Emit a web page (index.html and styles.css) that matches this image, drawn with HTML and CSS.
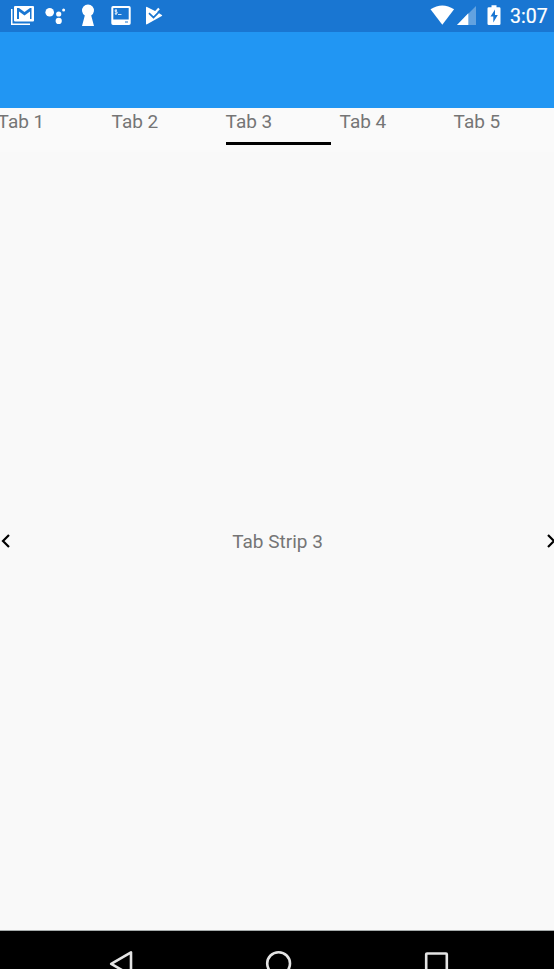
FILE: index.html
```html
<!DOCTYPE html>
<html lang="en">
<head>
<meta charset="utf-8">
<title>Tab Strip</title>
<link rel="stylesheet" href="styles.css">
</head>
<body>
<div class="screen">
  <header class="status">
    <svg class="notifications" width="170" height="32" viewBox="0 0 170 32" fill="#fff">
      <path d="M11 9h1.500v14.500H30V25H11z"/>
      <path fill-rule="evenodd" d="M15 6h18q1 0 1 1v13.500q0 1-1 1H15q-1 0-1-1V7q0-1 1-1zM17 8v11h2v-7.500l5.500 4 5.500-4V19h1.500V8H30l-5.500 4L19 8z"/>
      <circle cx="49.700" cy="12.200" r="4.300"/><circle cx="58.700" cy="14" r="2.600"/><circle cx="63.600" cy="10" r="1.500"/><circle cx="58.700" cy="20.900" r="3.100"/>
      <path d="M84.800 15.500a6 6 0 1 1 6.400 0L94 26H82z"/>
      <path fill-rule="evenodd" d="M113 6h16q1.700 0 1.700 1.700v15.600q0 1.700-1.700 1.700h-16q-1.700 0-1.700-1.700V7.700Q111.300 6 113 6zm.3 2v11.500h15.400V8zM125 21.500v1h3v-1z"/>
      <path d="M117 10.500q-2-1-2 .3t1.300 1 .8 1.300-2.300.5M116 9v6M118 14.500h3.500" fill="none" stroke="#fff" stroke-width=".8"/>
      <path d="M146 7.500q0-1 1-.5l11 5.600 3.800 2.300q.9.600 0 1.200L147 24.300q-1 .4-1-.8z"/>
      <path d="m149 13.200 4.500 4.300 6.800-6.800" fill="none" stroke="#1976d2" stroke-width="1.800"/>
      <path d="m151 12 2.500 2.500 5.500-6" fill="none" stroke="#fff" stroke-width="2.200"/>
    </svg>
    <svg class="system" width="74" height="32" viewBox="430 0 74 32" fill="#fff">
      <path d="M430.500 9.300q11.800-7.600 23.600 0L442.300 24.800z"/>
      <path d="M476 6v19h-19z" opacity=".32"/><path d="M468.300 13.300V25H457z"/>
      <path fill-rule="evenodd" d="M491.500 5.200h5v2h2.700q1.300 0 1.300 1.300v15.200q0 1.300-1.300 1.300h-10.400q-1.300 0-1.300-1.300V8.500q0-1.300 1.300-1.300h2.700zM495 9.500l-4.500 7h2.800V22.500l4.500-7.500H495z"/>
    </svg>
    <time class="clock">3:07</time>
  </header>
  <div class="toolbar"></div>
  <nav class="tabs">
    <a class="tab">Tab 1</a>
    <a class="tab">Tab 2</a>
    <a class="tab selected">Tab 3</a>
    <a class="tab">Tab 4</a>
    <a class="tab">Tab 5</a>
  </nav>
  <main class="page">
    <svg width="12" height="20" viewBox="0 0 12 20"><path d="m9 4-6 6 6 6"/></svg>
    <span class="title">Tab Strip 3</span>
    <svg width="12" height="20" viewBox="0 0 12 20"><path d="m6 4 6 6-6 6"/></svg>
  </main>
  <footer class="navbar">
    <svg width="554" height="38" viewBox="0 931 554 38">
      <path d="M131 952.300v23L111.200 963.800z"/>
      <circle cx="278.600" cy="963.600" r="11.400"/>
      <rect x="426.200" y="953.500" width="20.600" height="21" rx=".8"/>
    </svg>
  </footer>
</div>
</body>
</html>
```

FILE: styles.css
```css
body {
  margin: 0;
  background: #fafafa;
  color: #757575;
  font-family: Roboto, sans-serif;
  font-size: 19px;
}

svg {
  display: block;
  flex: none;
}

.screen {
  display: flex;
  flex-direction: column;
  height: 969px;
  overflow: hidden;
}

.status {
  display: flex;
  flex: none;
  height: 32px;
  background: #1976d2;
}

.system {
  margin-left: auto;
}

.clock {
  width: 44px;
  margin-left: 6px;
  color: #fff;
  font-size: 19.5px;
  -webkit-text-stroke: 0.2px #fff;
  line-height: 33px;
  white-space: nowrap;
}

.toolbar {
  flex: none;
  height: 76px;
  background: #2196f3;
}

.tabs {
  display: flex;
  flex: none;
  gap: 9px;
  height: 44px;
  margin-left: -2.4px;
}

.tab {
  box-sizing: border-box;
  flex: none;
  width: 105px;
  height: 37px;
  line-height: 28px;
}

.selected {
  border-bottom: 3px solid #000;
}

.page {
  display: flex;
  flex: 1;
  align-items: center;
  justify-content: space-between;
  background: #f9f9f9;
}

.title {
  padding: 1px 0 0 1px;
}

.page path {
  fill: none;
  stroke: #000;
  stroke-width: 2.2;
}

.navbar {
  box-sizing: border-box;
  flex: none;
  height: 39px;
  border-top: 1px solid #a5aaaa;
  background: #000;
}

.navbar svg {
  fill: none;
  stroke: #e4e4e4;
  stroke-width: 2.6;
  stroke-linejoin: round;
}
```
